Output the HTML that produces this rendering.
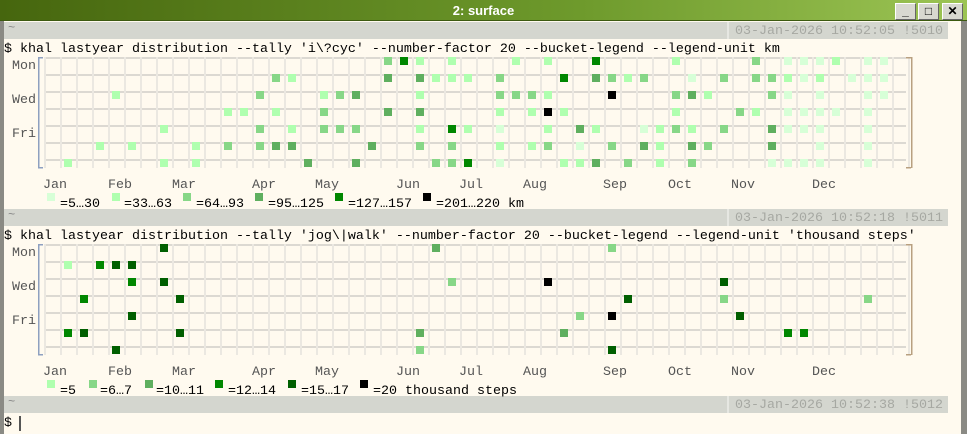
<!DOCTYPE html>
<html><head><meta charset="utf-8"><style>
*{margin:0;padding:0;box-sizing:border-box}
body{width:967px;height:434px;overflow:hidden;background:#8a8a84;font-family:"Liberation Mono","DejaVu Sans Mono",monospace;font-size:13.33px;position:relative}
#title{position:absolute;left:0;top:0;width:967px;height:21px;background:linear-gradient(90deg,#46660e,#6e9a2c 60%,#9cc454);border-bottom:1px solid #3c5a10}
#title span{position:absolute;left:0;width:967px;text-align:center;top:3px;color:#fff;font-family:"Liberation Sans",sans-serif;font-weight:bold;font-size:13px}
.btn{position:absolute;top:3px;width:21px;height:17px;background:#d8d8d0;border:1px solid #fff;border-right-color:#666;border-bottom-color:#666;font-family:"Liberation Sans",sans-serif;font-weight:bold;font-size:12px;text-align:center;line-height:14px;color:#000}
#term{position:absolute;left:4px;top:21px;width:957px;height:413px;background:#fffaef}
.t{position:absolute;white-space:pre;line-height:17px;color:#000;margin-top:2px}
.strip{position:absolute;left:4px;width:944px;height:17px;background:#d4d6cf}
.strip .tl{position:absolute;left:4px;top:-1px;color:#888;font-size:12px}
.strip .ts{position:absolute;left:723px;top:0;height:17px;border-left:2px solid #e6e7e2;padding-left:6px;color:#a6a8a2;white-space:pre;line-height:17px;padding-top:1px}
.g{color:#555}
.sq{position:absolute;width:8px;height:8px}
svg{position:absolute;left:0;top:0}
</style></head><body>
<div id="title"><span>2: surface</span>
<div class="btn" style="left:895px">_</div><div class="btn" style="left:918px">□</div><div class="btn" style="left:942px">✕</div></div>
<div id="term"></div>
<svg id="sv" width="967" height="434"></svg>
<div class="strip" style="top:22px"><span class="tl">~</span><span class="ts">03-Jan-2026 10:52:05 !5010</span></div>
<div class="t" style="left:4px;top:39px">$ khal lastyear distribution --tally 'i\?cyc' --number-factor 20 --bucket-legend --legend-unit km</div>
<div class="t g" style="left:12px;top:56px">Mon</div>
<div class="t g" style="left:12px;top:90px">Wed</div>
<div class="t g" style="left:12px;top:124px">Fri</div>
<div class="strip" style="top:209px"><span class="tl">~</span><span class="ts">03-Jan-2026 10:52:18 !5011</span></div>
<div class="t" style="left:4px;top:226px">$ khal lastyear distribution --tally 'jog\|walk' --number-factor 20 --bucket-legend --legend-unit 'thousand steps'</div>
<div class="t g" style="left:12px;top:243px">Mon</div>
<div class="t g" style="left:12px;top:277px">Wed</div>
<div class="t g" style="left:12px;top:311px">Fri</div>
<div class="strip" style="top:396px"><span class="tl">~</span><span class="ts">03-Jan-2026 10:52:38 !5012</span></div>
<div class="t" style="left:4px;top:413px">$ </div>
<div style="position:absolute;left:19px;top:416px;width:2px;height:15px;background:#555"></div>
<div id="extra"></div>
<script>
var sv=document.getElementById('sv'),ex=document.getElementById('extra'),h='',e='';
var C1=['','#d7ffd7','#afffaf','#87d787','#5faf5f','#008700','#005f00','#000'];
function chart(top,data,black){
 var bot=top+111;
 for(var r=0;r<7;r++){h+='<rect x="44" y="'+(top+17*r)+'" width="862" height="2" fill="#dcd9d2"/>';}
 for(var c=0;c<=54;c++){h+='<rect x="'+(44+16*c)+'" y="'+top+'" width="2" height="'+(bot-top)+'" fill="#ebe8e1"/>';}
 h+='<rect x="38" y="'+top+'" width="1.5" height="'+(bot-top)+'" fill="#8ea0c0"/><rect x="38" y="'+top+'" width="5" height="1.5" fill="#8ea0c0"/><rect x="38" y="'+(bot-1)+'" width="5" height="1.5" fill="#8ea0c0"/>';
 h+='<rect x="911" y="'+top+'" width="1.5" height="'+(bot-top)+'" fill="#b8a080"/><rect x="906" y="'+top+'" width="5" height="1.5" fill="#b8a080"/><rect x="906" y="'+(bot-1)+'" width="5" height="1.5" fill="#b8a080"/>';
 data.forEach(function(d){var col=d[2]==7?'#000':C1[d[2]];h+='<rect x="'+(48+16*d[1])+'" y="'+(top+17*d[0])+'" width="8" height="8" fill="'+col+'"/>';});
}
var d1=[[0,21,3],[0,22,5],[0,23,2],[0,25,2],[1,14,3],[1,15,2],[1,21,4],[1,23,4],[1,24,2],[1,25,2],[1,26,2],[2,4,2],[2,13,3],[2,17,2],[2,18,3],[2,19,4],[2,23,2],[3,11,2],[3,12,2],[3,14,2],[3,17,3],[3,21,4],[3,23,4],[4,7,2],[4,13,3],[4,15,2],[4,17,3],[4,18,3],[4,19,3],[4,23,2],[4,25,5],[4,26,2],[5,3,2],[5,5,2],[5,9,2],[5,11,3],[5,13,3],[5,14,4],[5,15,4],[5,20,4],[5,23,3],[5,25,3],[6,1,2],[6,7,2],[6,9,2],[6,16,4],[6,19,4],[6,24,3],[6,25,3],[6,26,5],
[0,29,2],[0,31,2],[0,34,5],[0,39,2],[0,44,3],[0,46,1],[0,47,1],[0,48,1],[0,49,2],[0,51,1],[0,52,1],
[1,28,3],[1,32,5],[1,34,4],[1,35,3],[1,36,2],[1,37,3],[1,40,1],[1,42,3],[1,44,3],[1,45,3],[1,46,2],[1,47,1],[1,48,2],[1,50,1],[1,51,1],[1,52,1],
[2,28,3],[2,29,3],[2,30,3],[2,31,2],[2,35,7],[2,39,3],[2,40,4],[2,41,2],[2,45,3],[2,46,1],[2,48,1],[2,51,1],[2,52,1],
[3,28,2],[3,30,2],[3,31,7],[3,32,2],[3,39,2],[3,43,3],[3,44,2],[3,46,1],[3,47,1],[3,48,1],[3,49,1],[3,51,1],
[4,28,1],[4,31,2],[4,33,4],[4,34,2],[4,37,1],[4,38,2],[4,39,3],[4,40,2],[4,42,3],[4,45,4],[4,46,1],[4,47,1],[4,48,1],[4,51,1],
[5,28,2],[5,30,2],[5,31,3],[5,33,1],[5,35,3],[5,37,4],[5,38,2],[5,40,4],[5,41,3],[5,45,4],[5,48,1],[5,51,1],
[6,28,1],[6,32,2],[6,33,2],[6,34,4],[6,36,3],[6,38,2],[6,40,3],[6,45,1],[6,46,1],[6,47,1],[6,48,1],[6,51,1]];
var d2=[[0,7,6],[0,24,4],[1,1,2],[1,3,5],[1,4,6],[1,5,6],[2,5,5],[2,7,6],[2,25,3],[3,2,5],[3,8,6],[4,5,6],[5,1,5],[5,2,6],[5,8,6],[5,23,4],[6,4,6],[6,23,3],
[0,35,3],[2,31,7],[2,42,6],[3,36,6],[3,42,3],[3,51,3],[4,33,3],[4,35,7],[4,43,6],[5,32,4],[5,46,5],[5,47,5],[6,35,6]];
chart(57,d1);chart(244,d2);
sv.innerHTML=h;
var months=[['Jan',43],['Feb',108],['Mar',172],['Apr',252],['May',315],['Jun',396],['Jul',459],['Aug',523],['Sep',603],['Oct',668],['Nov',731],['Dec',812]];
[175,362].forEach(function(y){months.forEach(function(m){e+='<div class="t g" style="left:'+m[1]+'px;top:'+y+'px">'+m[0]+'</div>';});});
var L1=[[47,60,'=5…30',1],[112,124,'=33…63',2],[183,196,'=64…93',3],[255,268,'=95…125',4],[335,348,'=127…157',5],[423,436,'=201…220 km',7]];
L1.forEach(function(l){e+='<div class="sq" style="left:'+l[0]+'px;top:193px;background:'+C1[l[3]]+'"></div><div class="t" style="left:'+l[1]+'px;top:194px">'+l[2]+'</div>';});
var L2=[[47,60,'=5',2],[89,100,'=6…7',3],[145,156,'=10…11',4],[215,228,'=12…14',5],[288,301,'=15…17',6],[360,373,'=20 thousand steps',7]];
L2.forEach(function(l){e+='<div class="sq" style="left:'+l[0]+'px;top:380px;background:'+C1[l[3]]+'"></div><div class="t" style="left:'+l[1]+'px;top:381px">'+l[2]+'</div>';});
ex.innerHTML=e;
</script>
</body></html>
